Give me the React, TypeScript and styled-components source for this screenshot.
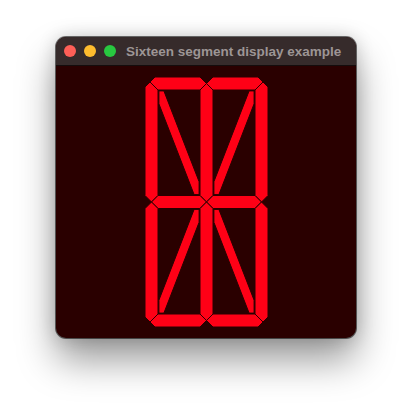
import styled, { createGlobalStyle } from "styled-components";

const GlobalStyle = createGlobalStyle`
  html, body {
    margin: 0;
    padding: 0;
    background: #ffffff;
  }
  body {
    font-family: "Liberation Sans", Arial, sans-serif;
  }
`;

const Page = styled.div`
  width: 412px;
  height: 412px;
  display: flex;
  justify-content: center;
  align-items: flex-start;
  padding-top: 37px;
  box-sizing: border-box;
`;

const Window = styled.div`
  width: 300px;
  height: 301px;
  border-radius: 10px;
  overflow: hidden;
  display: flex;
  flex-direction: column;
  background: #2a0000;
  box-shadow: 0 0 0 1px rgba(0, 0, 0, 0.55), 0 22px 38px rgba(0, 0, 0, 0.4),
    0 0 18px rgba(0, 0, 0, 0.18);
`;

const TitleBar = styled.div`
  height: 28px;
  flex: none;
  display: flex;
  align-items: center;
  padding-left: 8px;
  gap: 8px;
  background: #362b2b;
  border-bottom: 1px solid #140c0c;
`;

const Light = styled.span<{ $color: string }>`
  width: 12px;
  height: 12px;
  border-radius: 50%;
  background: ${(p) => p.$color};
  flex: none;
`;

const Title = styled.span`
  margin-left: 2px;
  font-size: 13.5px;
  font-weight: bold;
  color: #9d9595;
  white-space: nowrap;
`;

const Content = styled.div`
  flex: 1;
  display: flex;
  align-items: center;
  justify-content: center;
`;

const BG = "#2a0000";
const RED = "#ff0016";

const W = 123;
const H = 250;
const T = 13;
const h = T / 2;
const xm = W / 2;
const ym = 125;

type Pt = [number, number];

const seg = (pts: Pt[]) => pts.map((p) => p.join(",")).join(" ");

// diagonal band inside a cell, "\" direction, optionally mirrored to "/"
function diag(a: number, b: number, c: number, d: number, mirror: boolean) {
  const hw = 5;
  const k = (b - a) / (d - c);
  const pts: Pt[] = [
    [a, c],
    [a + hw, c],
    [b, d - hw / k],
    [b, d],
    [b - hw, d],
    [a, c + hw / k],
  ];
  return seg(mirror ? pts.map(([x, y]) => [a + b - x, y] as Pt) : pts);
}

const g = 0.9;

const segments: string[] = [
  // top
  seg([[5, 5], [10, 0], [xm - h, 0], [xm, h], [xm - h, T], [T, T]]),
  seg([[xm, h], [xm + h, 0], [W - 10, 0], [W - 5, 5], [W - T, T], [xm + h, T]]),
  // upper verticals
  seg([[0, 10], [5, 5], [T, T], [T, ym - h], [h, ym], [0, ym - h]]),
  seg([[W, 10], [W - 5, 5], [W - T, T], [W - T, ym - h], [W - h, ym], [W, ym - h]]),
  seg([[xm - h, T], [xm, h], [xm + h, T], [xm + h, ym - h], [xm, ym], [xm - h, ym - h]]),
  // middle
  seg([[h, ym], [T, ym - h], [xm - h, ym - h], [xm, ym], [xm - h, ym + h], [T, ym + h]]),
  seg([[xm, ym], [xm + h, ym - h], [W - T, ym - h], [W - h, ym], [W - T, ym + h], [xm + h, ym + h]]),
  // lower verticals
  seg([[0, ym + h], [h, ym], [T, ym + h], [T, H - T], [5, H - 5], [0, H - 10]]),
  seg([[W, ym + h], [W - h, ym], [W - T, ym + h], [W - T, H - T], [W - 5, H - 5], [W, H - 10]]),
  seg([[xm - h, ym + h], [xm, ym], [xm + h, ym + h], [xm + h, H - T], [xm, H - h], [xm - h, H - T]]),
  // bottom
  seg([[5, H - 5], [T, H - T], [xm - h, H - T], [xm, H - h], [xm - h, H], [10, H]]),
  seg([[xm, H - h], [xm + h, H - T], [W - T, H - T], [W - 5, H - 5], [W - 10, H], [xm + h, H]]),
  // diagonals
  diag(T + g, xm - h - g, T + g, ym - h - g, false),
  diag(xm + h + g, W - T - g, T + g, ym - h - g, true),
  diag(T + g, xm - h - g, ym + h + g, H - T - g, true),
  diag(xm + h + g, W - T - g, ym + h + g, H - T - g, false),
];

function SixteenSegment() {
  return (
    <svg width={W} height={H} viewBox={`0 0 ${W} ${H}`}>
      {segments.map((p, i) => (
        <polygon key={i} points={p} fill={RED} stroke={BG} strokeWidth={1} strokeLinejoin="miter" />
      ))}
    </svg>
  );
}

export default function App() {
  return (
    <>
      <GlobalStyle />
      <Page>
        <Window>
          <TitleBar>
            <Light $color="#fe5f57" />
            <Light $color="#febc2e" />
            <Light $color="#28c840" />
            <Title>Sixteen segment display example</Title>
          </TitleBar>
          <Content>
            <SixteenSegment />
          </Content>
        </Window>
      </Page>
    </>
  );
}
